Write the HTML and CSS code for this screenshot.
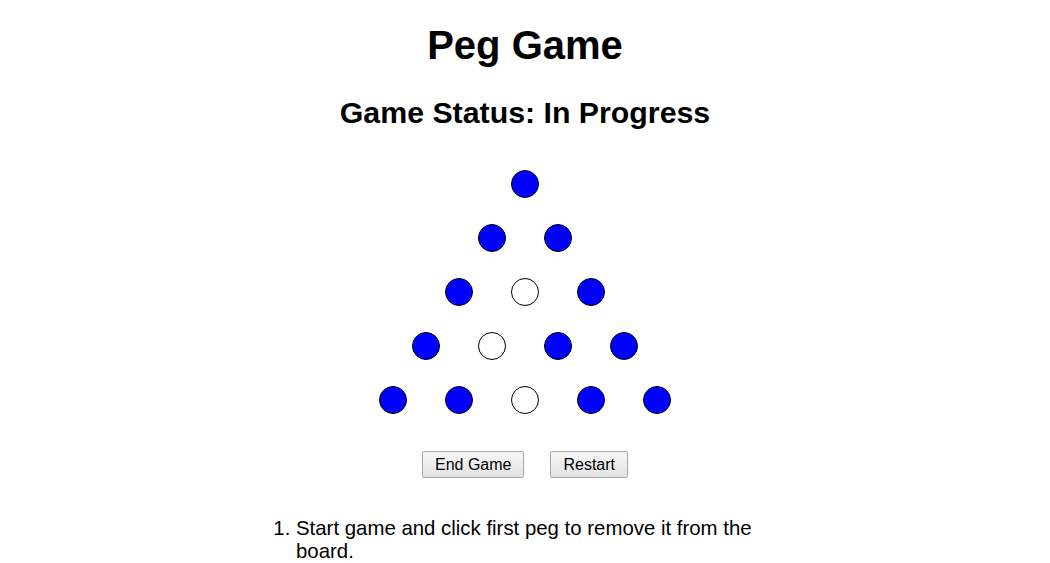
FILE: index.html
```html
<!DOCTYPE html>
<html>
<head>
<meta charset="utf-8">
<title>Peg Game</title>
<link rel="stylesheet" href="styles.css">
</head>
<body>
<div class="page">
  <h1 class="title">Peg Game</h1>
  <h2 class="status">Game Status: In Progress</h2>
  <div class="board">
    <div class="row"><span class="peg on"></span></div>
    <div class="row"><span class="peg on"></span><span class="peg on"></span></div>
    <div class="row"><span class="peg on"></span><span class="peg"></span><span class="peg on"></span></div>
    <div class="row"><span class="peg on"></span><span class="peg"></span><span class="peg on"></span><span class="peg on"></span></div>
    <div class="row"><span class="peg on"></span><span class="peg on"></span><span class="peg"></span><span class="peg on"></span><span class="peg on"></span></div>
  </div>
  <div class="controls">
    <button class="btn">End Game</button>
    <button class="btn">Restart</button>
  </div>
  <div class="instructions">
    <ol class="steps">
      <li>Start game and click first peg to remove it from the board.</li>
    </ol>
  </div>
</div>
</body>
</html>
```

FILE: styles.css
```css
html, body {
  margin: 0;
  padding: 0;
  background: #ffffff;
}
body {
  font-family: "Liberation Sans", Arial, sans-serif;
  color: #000000;
}
.page {
  display: flex;
  flex-direction: column;
  align-items: center;
  padding-top: 22px;
}
.title {
  font-size: 40px;
  font-weight: bold;
  line-height: 46px;
  margin: 0;
}
.status {
  font-size: 30.3px;
  font-weight: bold;
  line-height: 34px;
  margin: 28px 0 0 0;
}
.board {
  margin-top: 40px;
  display: flex;
  flex-direction: column;
  align-items: center;
  gap: 26px;
}
.row {
  display: flex;
  gap: 38px;
  justify-content: center;
}
.peg {
  width: 26px;
  height: 26px;
  border: 1px solid #000000;
  border-radius: 50%;
  background: #ffffff;
  display: block;
}
.peg.on {
  background: #0000ff;
}
.controls {
  margin-top: 37px;
  display: flex;
  gap: 26px;
}
.btn {
  font-family: "Liberation Sans", Arial, sans-serif;
  font-size: 16px;
  height: 27px;
  padding: 0 12px;
  background: linear-gradient(#f7f7f7, #e2e2e2);
  border: 1px solid #a9a9a9;
  border-radius: 2px;
  color: #000000;
}
.instructions {
  width: 520px;
  margin-top: 39px;
}
.steps {
  margin: 0;
  padding-left: 31px;
  font-size: 20.4px;
  line-height: 23px;
}
```
